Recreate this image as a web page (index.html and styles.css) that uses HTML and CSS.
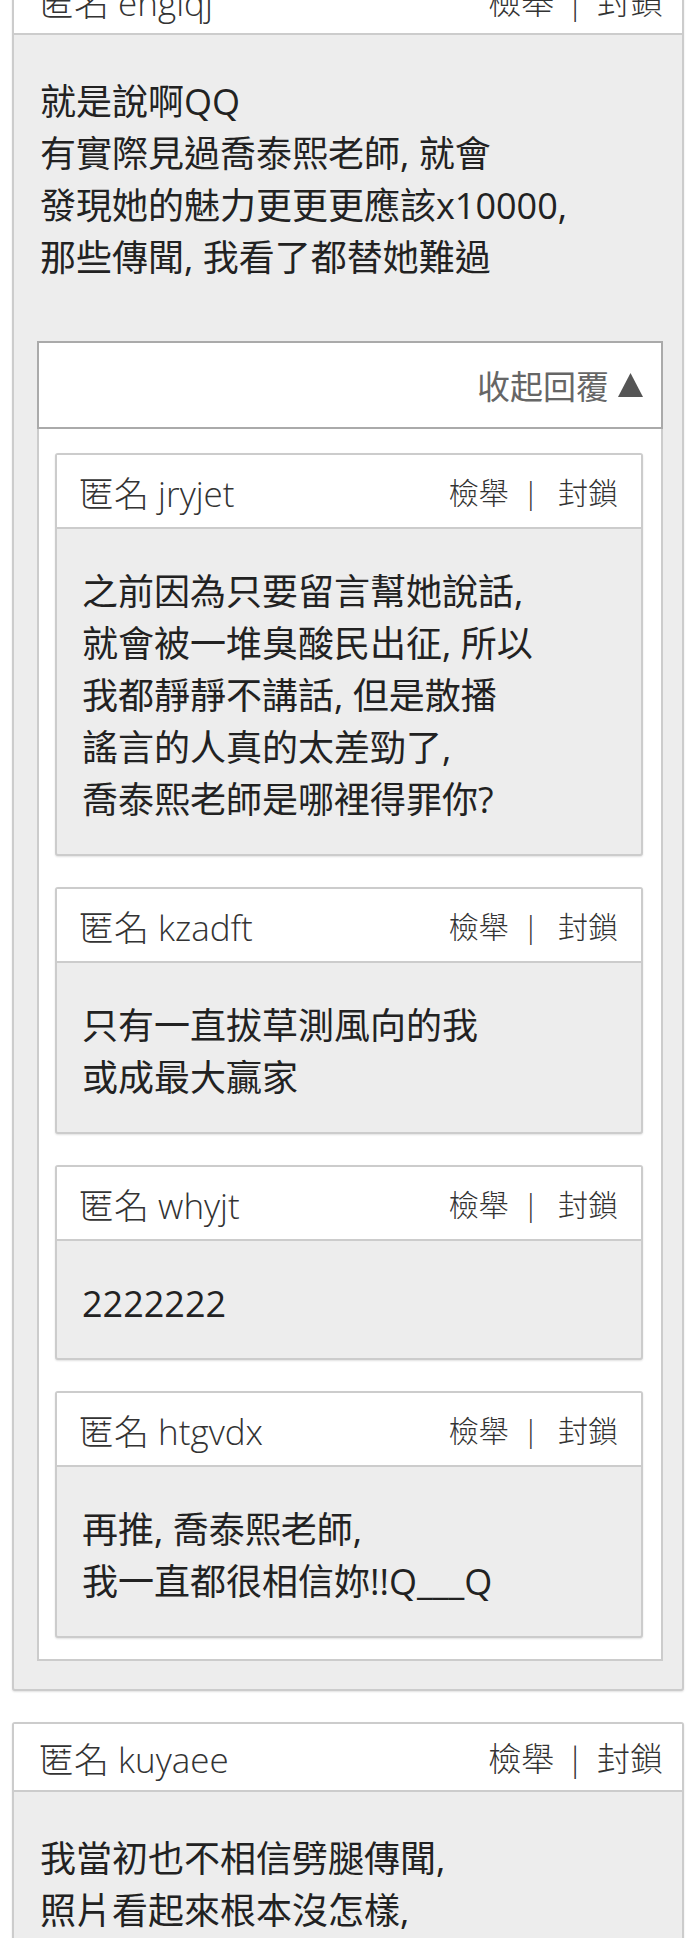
FILE: index.html
```html
<!DOCTYPE html>
<html lang="zh-Hant">
<head>
    <meta charset="UTF-8">
    <meta name="viewport" content="width=device-width, initial-scale=1.0">
    <title>留言</title>
    <link rel="stylesheet" href="styles.css">
</head>
<body>
    <div class="thread">
        <div class="post">
            <div class="post-head">
                <span class="author">匿名 engiqj</span>
                <span class="actions"><a href="#">檢舉</a><span class="sep">|</span><a href="#">封鎖</a></span>
            </div>
            <div class="post-body">
                <p class="post-text">就是說啊QQ<br>有實際見過喬泰熙老師, 就會<br>發現她的魅力更更更應該x10000,<br>那些傳聞, 我看了都替她難過</p>

                <div class="replies">
                    <div class="replies-toggle">
                        <span>收起回覆</span>
                        <svg class="caret" width="25" height="24" viewBox="0 0 25 24"><polygon points="12.5,0 25,24 0,24" fill="#555"/></svg>
                    </div>
                    <div class="reply-list">
                        <div class="reply">
                            <div class="reply-head">
                                <span class="author">匿名 jryjet</span>
                                <span class="actions"><a href="#">檢舉</a><span class="sep">|</span><a href="#">封鎖</a></span>
                            </div>
                            <div class="reply-body">之前因為只要留言幫她說話,<br>就會被一堆臭酸民出征, 所以<br>我都靜靜不講話, 但是散播<br>謠言的人真的太差勁了,<br>喬泰熙老師是哪裡得罪你?</div>
                        </div>
                        <div class="reply">
                            <div class="reply-head">
                                <span class="author">匿名 kzadft</span>
                                <span class="actions"><a href="#">檢舉</a><span class="sep">|</span><a href="#">封鎖</a></span>
                            </div>
                            <div class="reply-body">只有一直拔草測風向的我<br>或成最大贏家</div>
                        </div>
                        <div class="reply">
                            <div class="reply-head">
                                <span class="author">匿名 whyjt</span>
                                <span class="actions"><a href="#">檢舉</a><span class="sep">|</span><a href="#">封鎖</a></span>
                            </div>
                            <div class="reply-body">2222222</div>
                        </div>
                        <div class="reply">
                            <div class="reply-head">
                                <span class="author">匿名 htgvdx</span>
                                <span class="actions"><a href="#">檢舉</a><span class="sep">|</span><a href="#">封鎖</a></span>
                            </div>
                            <div class="reply-body">再推, 喬泰熙老師,<br>我一直都很相信妳!!Q___Q</div>
                        </div>
                    </div>
                </div>
            </div>
        </div>

        <div class="post">
            <div class="post-head">
                <span class="author">匿名 kuyaee</span>
                <span class="actions"><a href="#">檢舉</a><span class="sep">|</span><a href="#">封鎖</a></span>
            </div>
            <div class="post-body">
                <p class="post-text">我當初也不相信劈腿傳聞,<br>照片看起來根本沒怎樣,</p>
            </div>
        </div>
    </div>
</body>
</html>
```

FILE: styles.css
```css
body {
    margin: 0;
    background: #fff;
    color: #222;
    font-family: "Open Sans", "Noto Sans CJK TC", sans-serif;
}

a {
    color: inherit;
    text-decoration: none;
}

/* list is scrolled, first header is half out of view */
.thread {
    margin-top: -35px;
    padding: 0 6px 0 12px;
}

.post {
    background: #ededed;
    border: 2px solid #ccc;
    border-radius: 3px;
    box-shadow: 0 1px 2px rgba(0, 0, 0, 0.12);
    margin-bottom: 31px;
}

.post-head,
.reply-head {
    display: flex;
    align-items: center;
    justify-content: space-between;
    background: #fff;
    border-bottom: 2px solid #ccc;
    color: #333;
    font-size: 32px;
    font-weight: 300;
}

.author {
    font-size: 35px;
}

.post-head {
    height: 66px;
    padding: 0 19px 0 25px;
}

.post-head .actions {
    font-size: 33px;
}

.post-head .sep {
    margin: 0 13px 0 12px;
}

.post-body {
    padding: 41px 19px 28px 23px;
}

.post-text {
    margin: 0 0 57px 3px;
    font-size: 36px;
    line-height: 52px;
}

.replies-toggle {
    display: flex;
    align-items: center;
    justify-content: flex-end;
    gap: 9px;
    height: 84px;
    padding-right: 18px;
    background: #fff;
    border: 2px solid #aaa;
    color: #666;
    font-size: 33px;
}

.reply-list {
    display: flex;
    flex-direction: column;
    gap: 31px;
    padding: 24px 18px 21px 16px;
    background: #fff;
    border: 2px solid #ccc;
    border-top: 0;
}

.reply {
    background: #ededed;
    border: 2px solid #ccc;
    border-radius: 3px;
    box-shadow: 0 1px 2px rgba(0, 0, 0, 0.12);
}

.reply-head {
    height: 72px;
    padding: 0 23px 0 22px;
}

.reply-head .actions {
    font-size: 30px;
}

.reply-head .sep {
    margin: 0 19px 0 14px;
}

.reply-body {
    padding: 37px 24px 28px 25px;
    font-size: 36px;
    line-height: 52px;
}
```
